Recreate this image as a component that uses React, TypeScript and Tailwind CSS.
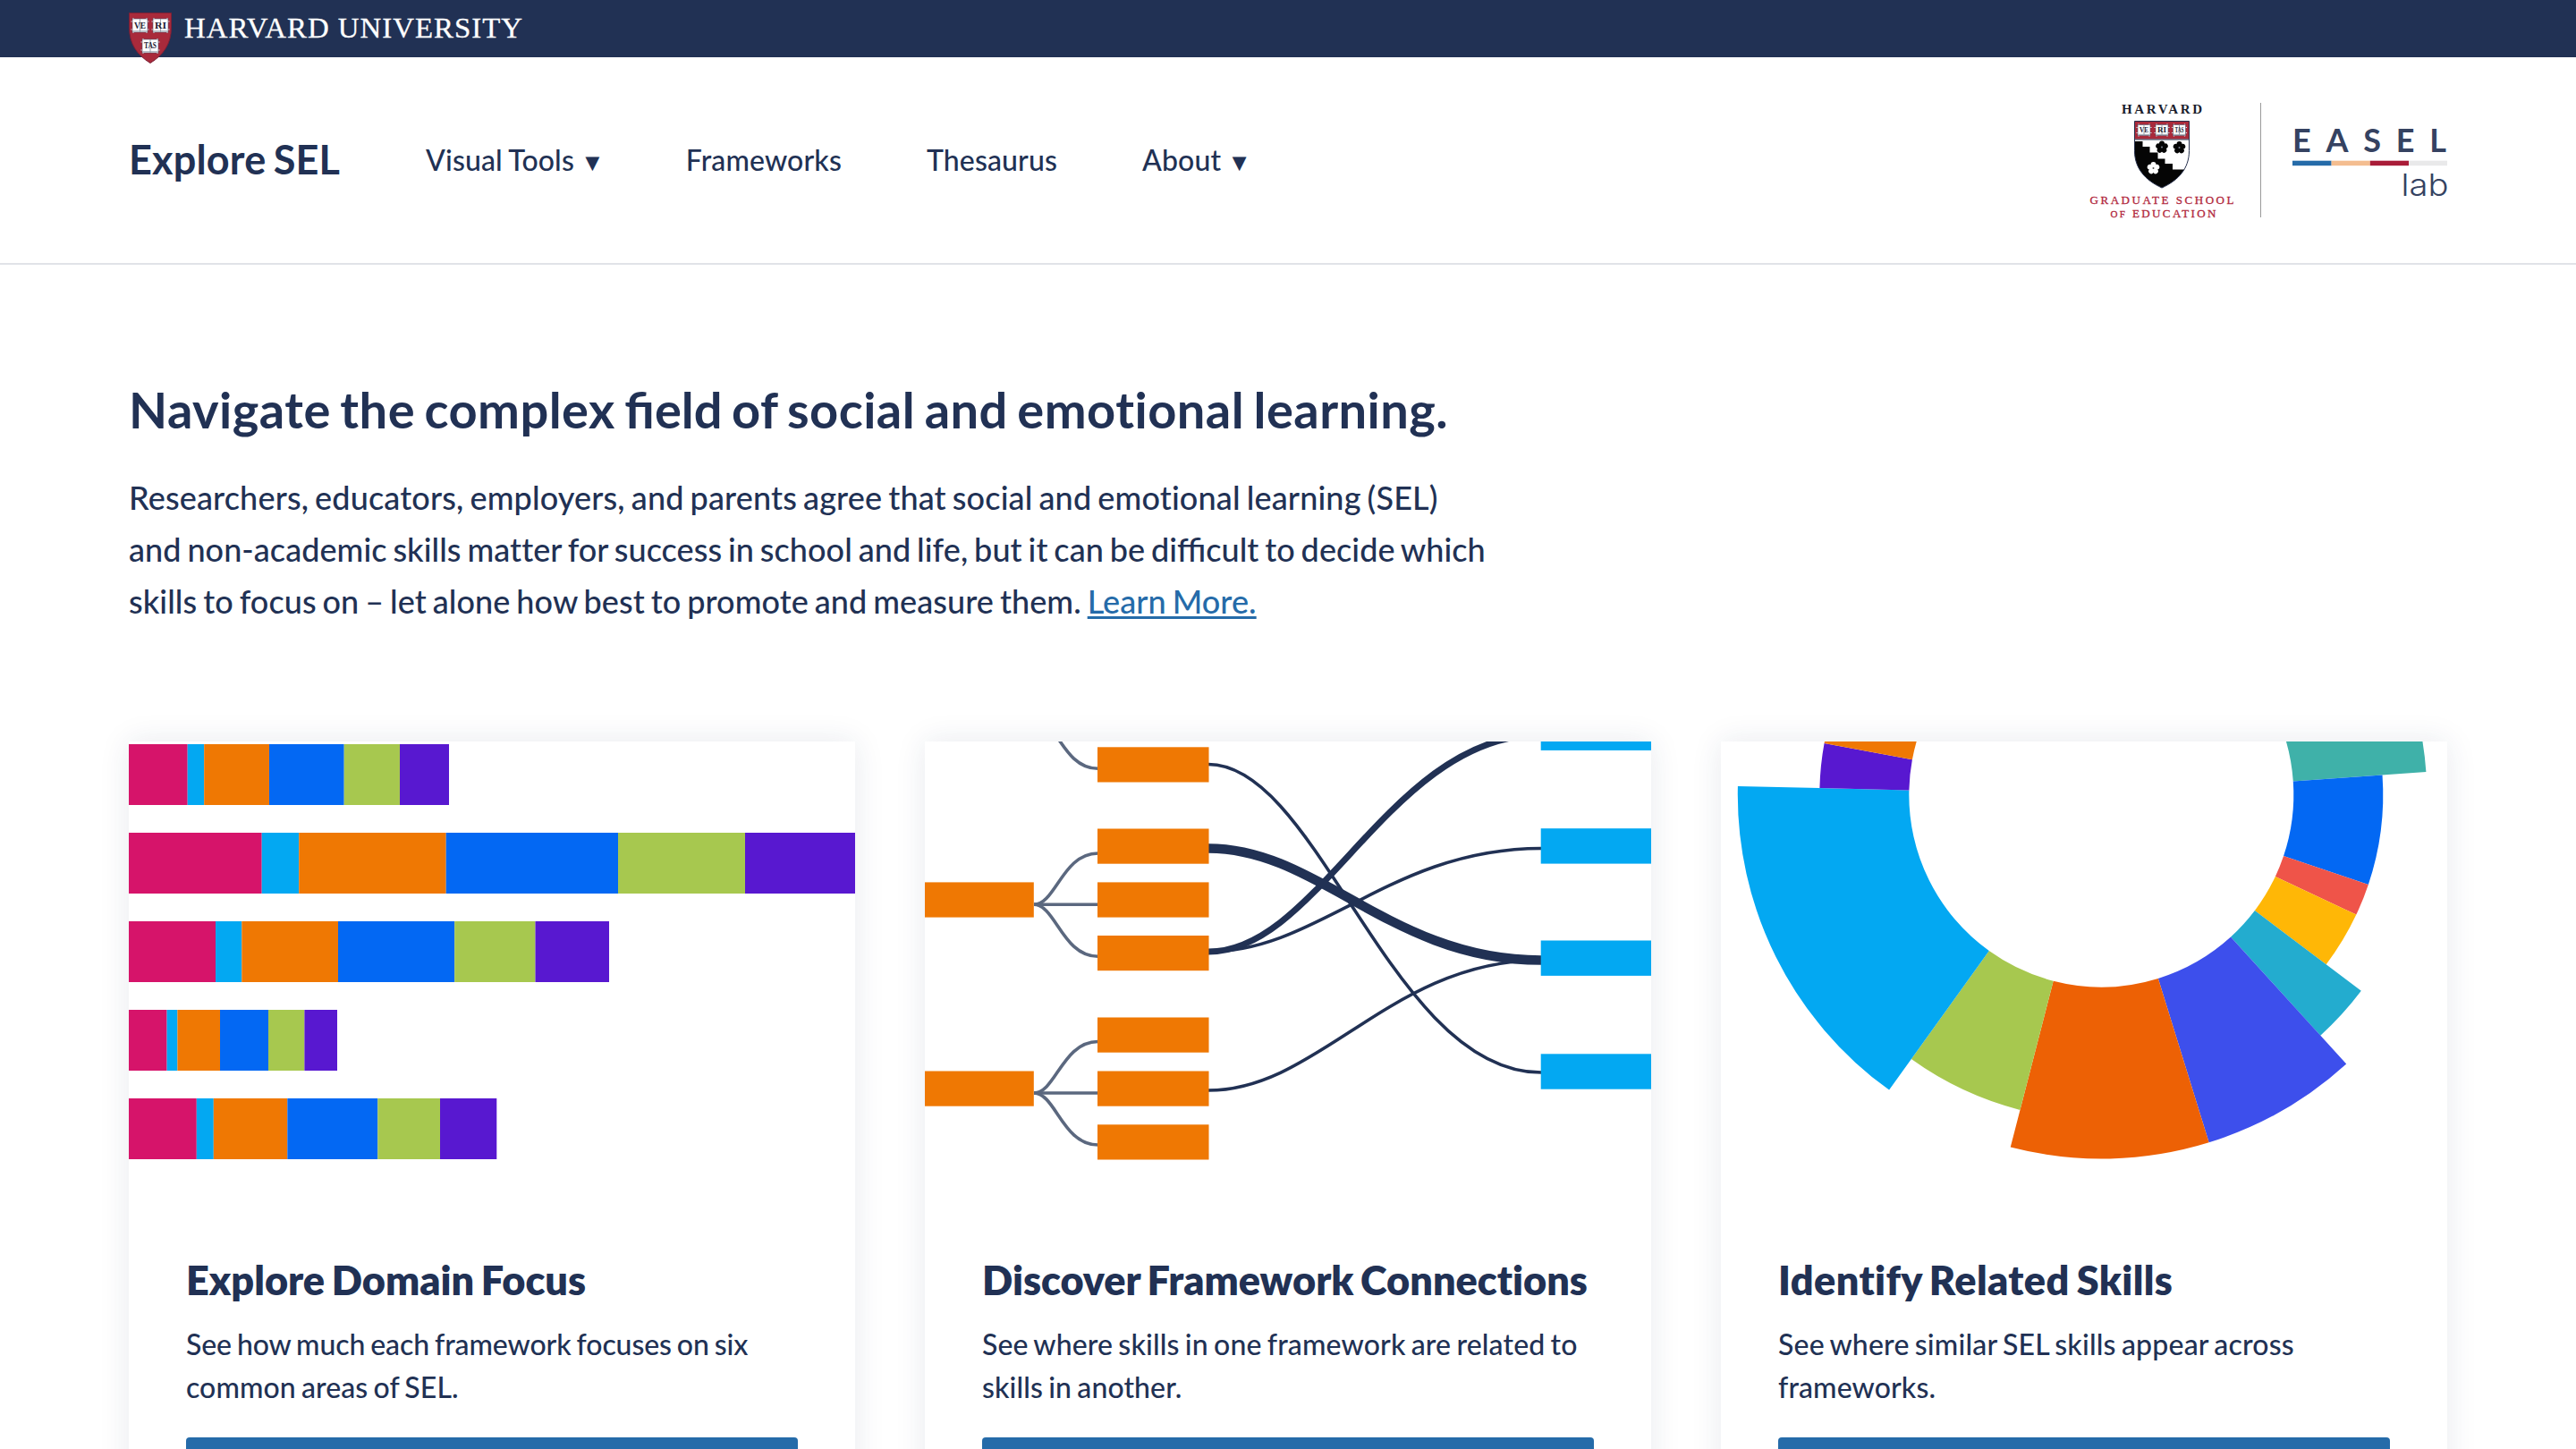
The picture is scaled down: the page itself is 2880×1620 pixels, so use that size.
import React from 'react';

type CardLine = { text: string; tracking: string };

const DOMAIN_COLORS = ['#d6146a', '#03a8f2', '#ef7803', '#0368f3', '#a7c84f', '#5818d0'];

const DOMAIN_ROWS: number[][] = [
  [65.7, 18.5, 72.8, 83.7, 62.3, 55],
  [148.7, 41.5, 164.5, 192.3, 142, 123],
  [97, 29.3, 107.7, 130.2, 90.3, 82.5],
  [42.6, 11.8, 47.6, 54, 40.4, 36.6],
  [75.8, 19, 82.5, 101, 69.7, 63.3],
];

const DomainChart = () => (
  <svg viewBox="0 0 812 510" className="block w-full h-[510px]">
    {DOMAIN_ROWS.map((row, r) => {
      let x = 0;
      return row.map((width, i) => {
        const rect = <rect key={`${r}-${i}`} x={x} y={3 + r * 99} width={width} height={68} fill={DOMAIN_COLORS[i]} />;
        x += width;
        return rect;
      });
    })}
  </svg>
);

const branch = (y1: number, y2: number) => `M122 ${y1}C146 ${y1} 154 ${y2} 193.5 ${y2}`;
const link = (y1: number, y2: number) => `M317 ${y1}C441 ${y1} 521 ${y2} 689 ${y2}`;

const ConnectionsChart = () => (
  <svg viewBox="0 0 812 510" className="block w-full h-[510px]">
    <g fill="none" stroke="#5b687f" strokeWidth={3.6}>
      <path d={branch(-28, 30.3)} />
      <path d={branch(182.3, 125)} />
      <path d={branch(182.3, 182.3)} />
      <path d={branch(182.3, 240.3)} />
      <path d={branch(393, 335.5)} />
      <path d={branch(393, 393)} />
      <path d={branch(393, 451)} />
    </g>
    <g fill="none" stroke="#213154" strokeWidth={3.6}>
      <path d={link(25.5, 370)} />
      <path d={link(235, 119.5)} />
      <path d={link(390, 244.5)} />
      <path d={link(235, -7.5)} strokeWidth={7} />
      <path d={link(119.5, 244.5)} strokeWidth={10.5} />
    </g>
    <g fill="#ef7803">
      {[6.3, 97.5, 157.4, 217, 308.5, 368.5, 428.3].map((y) => (
        <rect key={y} x={193} y={y} width={124.5} height={39.2} />
      ))}
      <rect x={0} y={157.4} width={121.8} height={39.2} />
      <rect x={0} y={368.5} width={121.8} height={39.2} />
    </g>
    <g fill="#03a8f2">
      {[-29.5, 97.2, 222.5, 349.3].map((y) => (
        <rect key={y} x={688.7} y={y} width={124} height={39.4} />
      ))}
    </g>
  </svg>
);

const CX = 425.3;
const CY = 59.5;
const INNER = 215;

const wedge = (from: number, to: number, outer: number) => {
  const point = (deg: number, r: number) => {
    const a = (deg * Math.PI) / 180;
    return `${(CX + r * Math.cos(a)).toFixed(2)} ${(CY + r * Math.sin(a)).toFixed(2)}`;
  };
  return `M${point(from, INNER)}L${point(from, outer)}A${outer} ${outer} 0 0 1 ${point(to, outer)}L${point(to, INNER)}A${INNER} ${INNER} 0 0 0 ${point(from, INNER)}Z`;
};

const WEDGES: { from: number; to: number; outer: number; color: string }[] = [
  { from: -30, to: -4, outer: 364, color: '#3fb1a9' },
  { from: -4, to: 18.6, outer: 315, color: '#0368f3' },
  { from: 18.6, to: 25.2, outer: 315, color: '#ef5449' },
  { from: 25.2, to: 37.05, outer: 315, color: '#ffb706' },
  { from: 37.05, to: 47.7, outer: 364, color: '#23accf' },
  { from: 47.7, to: 72.8, outer: 407, color: '#3d4fec' },
  { from: 72.8, to: 104.45, outer: 407, color: '#ed6105' },
  { from: 104.45, to: 125.7, outer: 364, color: '#a7c84f' },
  { from: 125.7, to: 181.35, outer: 406.5, color: '#03a8f2' },
  { from: 181.35, to: 190.5, outer: 315, color: '#5818d0' },
  { from: 190.5, to: 205, outer: 315, color: '#ef7803' },
];

const SkillsChart = () => (
  <svg viewBox="0 0 812 510" className="block w-full h-[510px]">
    {WEDGES.map((w) => (
      <path key={w.from} d={wedge(w.from, w.to, w.outer)} fill={w.color} />
    ))}
  </svg>
);

const Book: React.FC<{ x: number; y: number; w: number; h: number; label: string; size: number }> = ({ x, y, w, h, label, size }) => (
  <g>
    <path
      d={`M${x - 1.5} ${y + 3}h${w + 3}M${x - 1.5} ${y + h - 3}h${w + 3}M${x + 1} ${y - 1}v${h + 2}M${x + w - 1} ${y - 1}v${h + 2}`}
      stroke="#e9eaec"
      strokeWidth={1.2}
    />
    <rect x={x} y={y} width={w} height={h} fill="#fff" stroke="#4a4f66" strokeWidth={0.6} />
    <path d={`M${x + 0.5} ${y + h - 1.2}h${w - 1}M${x + w / 2} ${y}v${h}`} stroke="#8f98a5" strokeWidth={0.9} />
    <text
      x={x + 2}
      y={y + h / 2 + size * 0.31}
      fontSize={size}
      fontWeight={700}
      fontFamily="Liberation Serif, serif"
      fill="#1e2233"
      textLength={w - 4}
      lengthAdjust="spacingAndGlyphs"
    >
      {label}
    </text>
  </g>
);

const HarvardLogo = () => (
  <svg width="450" height="72" viewBox="0 0 450 72" className="block shrink-0">
    <path d="M.5 14.5h47v16c0 19-9 31-23.5 40C9.5 61.5.5 49.5.5 30.5z" fill="#a92a3b" stroke="#7b2036" strokeWidth={1} />
    <Book x={4} y={21} w={17} h={15} label="VE" size={10} />
    <Book x={27} y={21} w={17} h={15} label="RI" size={10} />
    <Book x={15} y={44} w={18} h={15} label="TAS" size={9.5} />
    <text
      x="62"
      y="42"
      fontSize="32.5"
      fontFamily="Liberation Serif, serif"
      letterSpacing="1"
      fill="#fff"
      stroke="#fff"
      strokeWidth=".3"
      textLength="379"
      lengthAdjust="spacingAndGlyphs"
    >
      HARVARD UNIVERSITY
    </text>
  </svg>
);

const Cinquefoil: React.FC<{ cx: number; cy: number; color: string; center: string }> = ({ cx, cy, color, center }) => (
  <g fill={color}>
    {[0, 72, 144, 216, 288].map((deg) => (
      <circle key={deg} cx={cx} cy={cy - 4} r={3} transform={`rotate(${deg} ${cx} ${cy})`} />
    ))}
    <circle cx={cx} cy={cy} r={3} />
    <circle cx={cx} cy={cy} r={1} fill={center} />
  </g>
);

const SHIELD = 'M50.5 20.5h61v33c0 20-12 33-30.5 41.5C62.5 86.5 50.5 73.5 50.5 53.5z';

const PartnerLogos = () => (
  <svg width="404" height="140" viewBox="0 -6 404 140" className="-mr-1 block overflow-visible">
    <g fontFamily="Liberation Serif, serif">
      <text x="36" y="12.3" fontSize="15" fontWeight={700} fill="#1a1d2c" textLength="90">HARVARD</text>
      <g fill="#b1273c" stroke="#b1273c" strokeWidth=".3">
        <text x=".5" y="113" fontSize="13" textLength="161">GRADUATE SCHOOL</text>
        <text x="23.5" y="128" fontSize="13" textLength="118">
          <tspan fontSize="11">OF</tspan> EDUCATION
        </text>
      </g>
    </g>
    <clipPath id="gse-shield">
      <path d={SHIELD} />
    </clipPath>
    <g clipPath="url(#gse-shield)">
      <rect x="50" y="20" width="62" height="76" fill="#fff" />
      <path d="M50 43h9.5v6h8v6.5h9v7h8v5.5h8.5v6.5h27v22h-70z" fill="#050505" />
      <rect x="50" y="20" width="62" height="20.5" fill="#a92a3b" />
      <path d="M50 41h62" stroke="#222b4a" strokeWidth={1} />
    </g>
    <path d={SHIELD} fill="none" stroke="#26304d" strokeWidth={1} />
    <Book x={54} y={24.5} w={14} h={12} label="VE" size={8} />
    <Book x={74} y={24.5} w={14} h={12} label="RI" size={8} />
    <Book x={93.5} y={24.5} w={14} h={12} label="TAS" size={8} />
    <Cinquefoil cx={81} cy={49.5} color="#050505" center="#7d8494" />
    <Cinquefoil cx={100.5} cy={50} color="#050505" center="#7d8494" />
    <Cinquefoil cx={71.5} cy={73} color="#fff" center="#555" />
    <path d="M191.5 0v128" stroke="#999" strokeWidth={1} />
    <text x="227" y="55" fontSize="36" fontWeight={700} fontFamily="Lato, sans-serif" fill="#354261" textLength="172">EASEL</text>
    <rect x="227" y="64.7" width="43.6" height="5.5" fill="#256ba9" />
    <rect x="270.6" y="64.7" width="43.2" height="5.5" fill="#f4bd90" />
    <rect x="313.8" y="64.7" width="43.2" height="5.5" fill="#a91c38" />
    <rect x="357" y="64.7" width="43" height="5.5" fill="#e9e9ea" />
    <text
      x="348.5"
      y="103.5"
      fontSize="34"
      fontFamily="Inter, sans-serif"
      fontWeight={300}
      fill="#354261"
      textLength="53"
      lengthAdjust="spacingAndGlyphs"
    >
      lab
    </text>
  </svg>
);

const NAV_ITEMS = [
  { label: 'Visual Tools', menu: true },
  { label: 'Frameworks', menu: false },
  { label: 'Thesaurus', menu: false },
  { label: 'About', menu: true },
];

const Header = () => (
  <header>
    <div className="flex h-16 bg-[#213154] px-36">
      <HarvardLogo />
    </div>
    <div className="flex h-[232px] items-center border-b-2 border-[#e1e3e8] px-36">
      <a className="w-[332px] pb-0.5 text-[45px] font-bold leading-none tracking-[0.18px] [word-spacing:-0.063em]">
        Explore SEL
      </a>
      <nav className="flex gap-[95px] text-[32px] font-medium leading-none tracking-[0.14px]">
        {NAV_ITEMS.map((item) => (
          <a key={item.label} className="flex items-baseline [word-spacing:-0.03em]">
            {item.label}
            {item.menu && <span className="-mr-1 ml-[7px] text-[27px] leading-none">▼</span>}
          </a>
        ))}
      </nav>
      <div className="ml-auto">
        <PartnerLogos />
      </div>
    </div>
  </header>
);

const Card: React.FC<{ title: string; titleTracking: string; lines: CardLine[]; children: React.ReactNode }> = ({
  title,
  titleTracking,
  lines,
  children,
}) => (
  <article className="h-[900px] w-[812px] bg-white shadow-[0_0_32px_rgba(33,49,84,0.1)]">
    {children}
    <div className="px-16 pt-[65px]">
      <h2 className={`text-[45px] font-extrabold leading-[54px] [word-spacing:-0.063em] ${titleTracking}`}>{title}</h2>
      <p className="mt-[21px] text-[32px] font-medium leading-[48px] [word-spacing:-0.063em]">
        {lines.map((line) => (
          <span key={line.text} className={`block whitespace-nowrap ${line.tracking}`}>{line.text}</span>
        ))}
      </p>
      <button className="mt-8 block h-24 w-full rounded bg-[#256ba9]" />
    </div>
  </article>
);

// letter spacing turns ligatures off, so words with fi / ffi opt out of it
const Lig: React.FC<{ children: string }> = ({ children }) => <span className="tracking-normal">{children}</span>;

const App: React.FC = () => {
  return (
    <div className="h-screen overflow-hidden bg-white font-[Lato,sans-serif] text-[#213154]">
      <Header />
      <main className="px-36 pt-32">
        <h1 className="text-[56px] font-bold leading-[67px] tracking-[0.46px] [word-spacing:-0.063em]">
          Navigate the complex <Lig>field</Lig> of social and emotional learning.
        </h1>
        <p className="mt-9 text-[36px] font-medium leading-[58px] [word-spacing:-0.063em]">
          <span className="block tracking-[0.16px]">
            Researchers, educators, employers, and parents agree that social and emotional learning (SEL)
          </span>
          <span className="block tracking-[0.06px]">
            and non-academic skills matter for success in school and life, but it can be <Lig>difficult</Lig> to decide which
          </span>
          <span className="block tracking-[0.08px]">
            skills to focus on – let alone how best to promote and measure them.{' '}
            <a className="text-[#256ba9] underline decoration-[2.5px] underline-offset-[3px]">Learn More.</a>
          </span>
        </p>
        <section className="mt-32 flex gap-[78px]">
          <Card
            title="Explore Domain Focus"
            titleTracking="tracking-[0.02px]"
            lines={[
              { text: 'See how much each framework focuses on six', tracking: 'tracking-[-0.09px]' },
              { text: 'common areas of SEL.', tracking: 'tracking-[0.09px]' },
            ]}
          >
            <DomainChart />
          </Card>
          <Card
            title="Discover Framework Connections"
            titleTracking="tracking-[0.01px]"
            lines={[
              { text: 'See where skills in one framework are related to', tracking: 'tracking-[0.15px]' },
              { text: 'skills in another.', tracking: 'tracking-[0.11px]' },
            ]}
          >
            <ConnectionsChart />
          </Card>
          <Card
            title="Identify Related Skills"
            titleTracking="tracking-[0.4px]"
            lines={[
              { text: 'See where similar SEL skills appear across', tracking: 'tracking-[0.19px]' },
              { text: 'frameworks.', tracking: 'tracking-[0.12px]' },
            ]}
          >
            <SkillsChart />
          </Card>
        </section>
      </main>
    </div>
  );
};

export default App;
